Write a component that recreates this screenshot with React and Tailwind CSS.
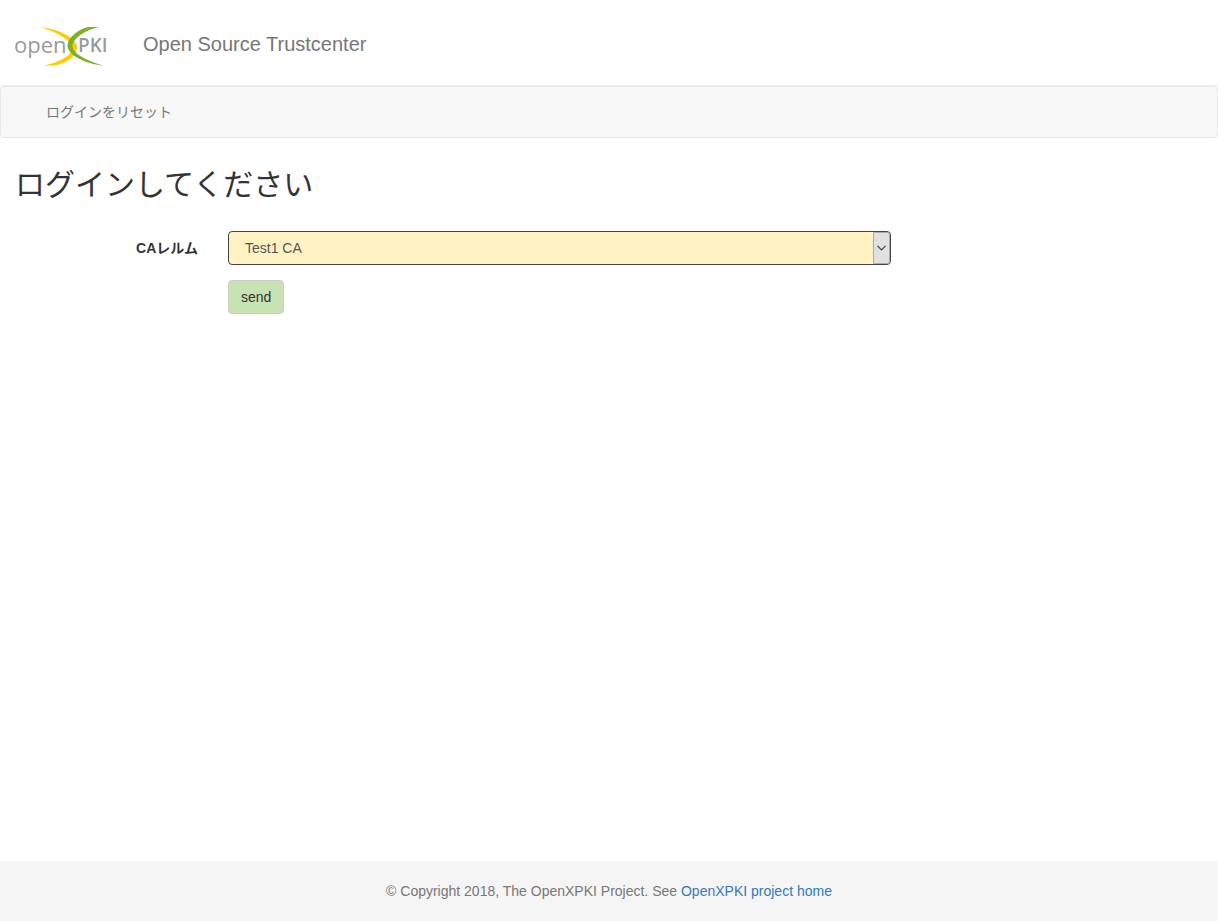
import React, { useState } from 'react';

const realms = [{ value: 'test1', label: 'Test1 CA' }];

const Logo = () => (
  <svg width="92" height="40" viewBox="0 0 92 40" role="img" aria-label="OpenXPKI">
    <text x="-1" y="27" fontSize="22" fill="#9a9a9a" fontFamily="'Open Sans', sans-serif">
      open
    </text>
    <path
      d="M26 1 C40 6 56 13 57 22 C57 29 46 36 29 39.5 L40 39.5 C52 37 62 30 62 21 C61 11 42 3 26 1 Z"
      fill="#ffcc00"
    />
    <path
      d="M73 1 C62 4 52.5 12 52.5 20 C53 29 70 38 88 39.5 C73 35 57.5 28 57.5 20 C57.5 13 70 4 84 1 Z"
      fill="#7fb02b"
    />
    <text x="63" y="26" fontSize="19" fontWeight="600" fill="#9a9a9a" fontFamily="'Open Sans', sans-serif">
      PKI
    </text>
  </svg>
);

const Header = () => (
  <header className="flex h-[86px] items-start border-b border-[#eee] px-[15px] pt-[26px]">
    <a href="#home" className="shrink-0">
      <Logo />
    </a>
    <p className="ml-9 pt-1 text-[20px] leading-7 text-[#777]">Open Source Trustcenter</p>
  </header>
);

const NavBar = () => (
  <nav className="rounded border border-[#e7e7e7] bg-[#f8f8f8] px-[45px] py-[15px] leading-5">
    <a href="#logout" className="text-[#777]">ログインをリセット</a>
  </nav>
);

const LoginForm = () => {
  const [realm, setRealm] = useState('test1');

  return (
    <form className="grid grid-cols-12 gap-y-[15px]" onSubmit={(e) => e.preventDefault()}>
      <label htmlFor="realm" className="col-span-2 px-[15px] pt-[7px] text-right font-bold leading-5">
        CAレルム
      </label>
      <div className="col-span-7 px-[15px]">
        <div className="relative">
          <select
            id="realm"
            value={realm}
            onChange={(e) => setRealm(e.target.value)}
            className="block h-[34px] w-full appearance-none rounded border border-[#444] bg-[#fff2c2] pl-4 pr-6 text-[#555]"
          >
            {realms.map((r) => (
              <option key={r.value} value={r.value}>{r.label}</option>
            ))}
          </select>
          <span className="pointer-events-none absolute inset-y-px right-px flex w-[17px] items-center justify-center rounded-r-[3px] border border-[#adadad] bg-[#e1e1e1]">
            <svg width="9" height="6" viewBox="0 0 9 6" fill="none" stroke="#444" strokeWidth="1.2">
              <path d="M0.5 0.8 L4.5 4.8 L8.5 0.8" />
            </svg>
          </span>
        </div>
      </div>
      <div className="col-span-7 col-start-3 px-[15px]">
        <button type="submit" className="h-[34px] rounded border border-[#ccc] bg-[#c8e2b3] px-3 text-[#333]">
          send
        </button>
      </div>
    </form>
  );
};

const Footer = () => (
  <footer className="flex h-[60px] items-center justify-center bg-[#f5f5f5] text-[#777]">
    <p>
      © Copyright 2018, The OpenXPKI Project. See{' '}
      <a href="#project" className="text-[#337ab7]">OpenXPKI project home</a>
    </p>
  </footer>
);

const App = () => (
  <div className="flex min-h-screen flex-col bg-white font-['Liberation_Sans','Noto_Sans_CJK_JP',sans-serif] text-[14px] leading-5 text-[#333]">
    <Header />
    <NavBar />
    <main className="grow px-[15px] pt-7">
      <h1 className="mb-7 text-[30px] leading-[37px]">ログインしてください</h1>
      <LoginForm />
    </main>
    <Footer />
  </div>
);

export default App;
